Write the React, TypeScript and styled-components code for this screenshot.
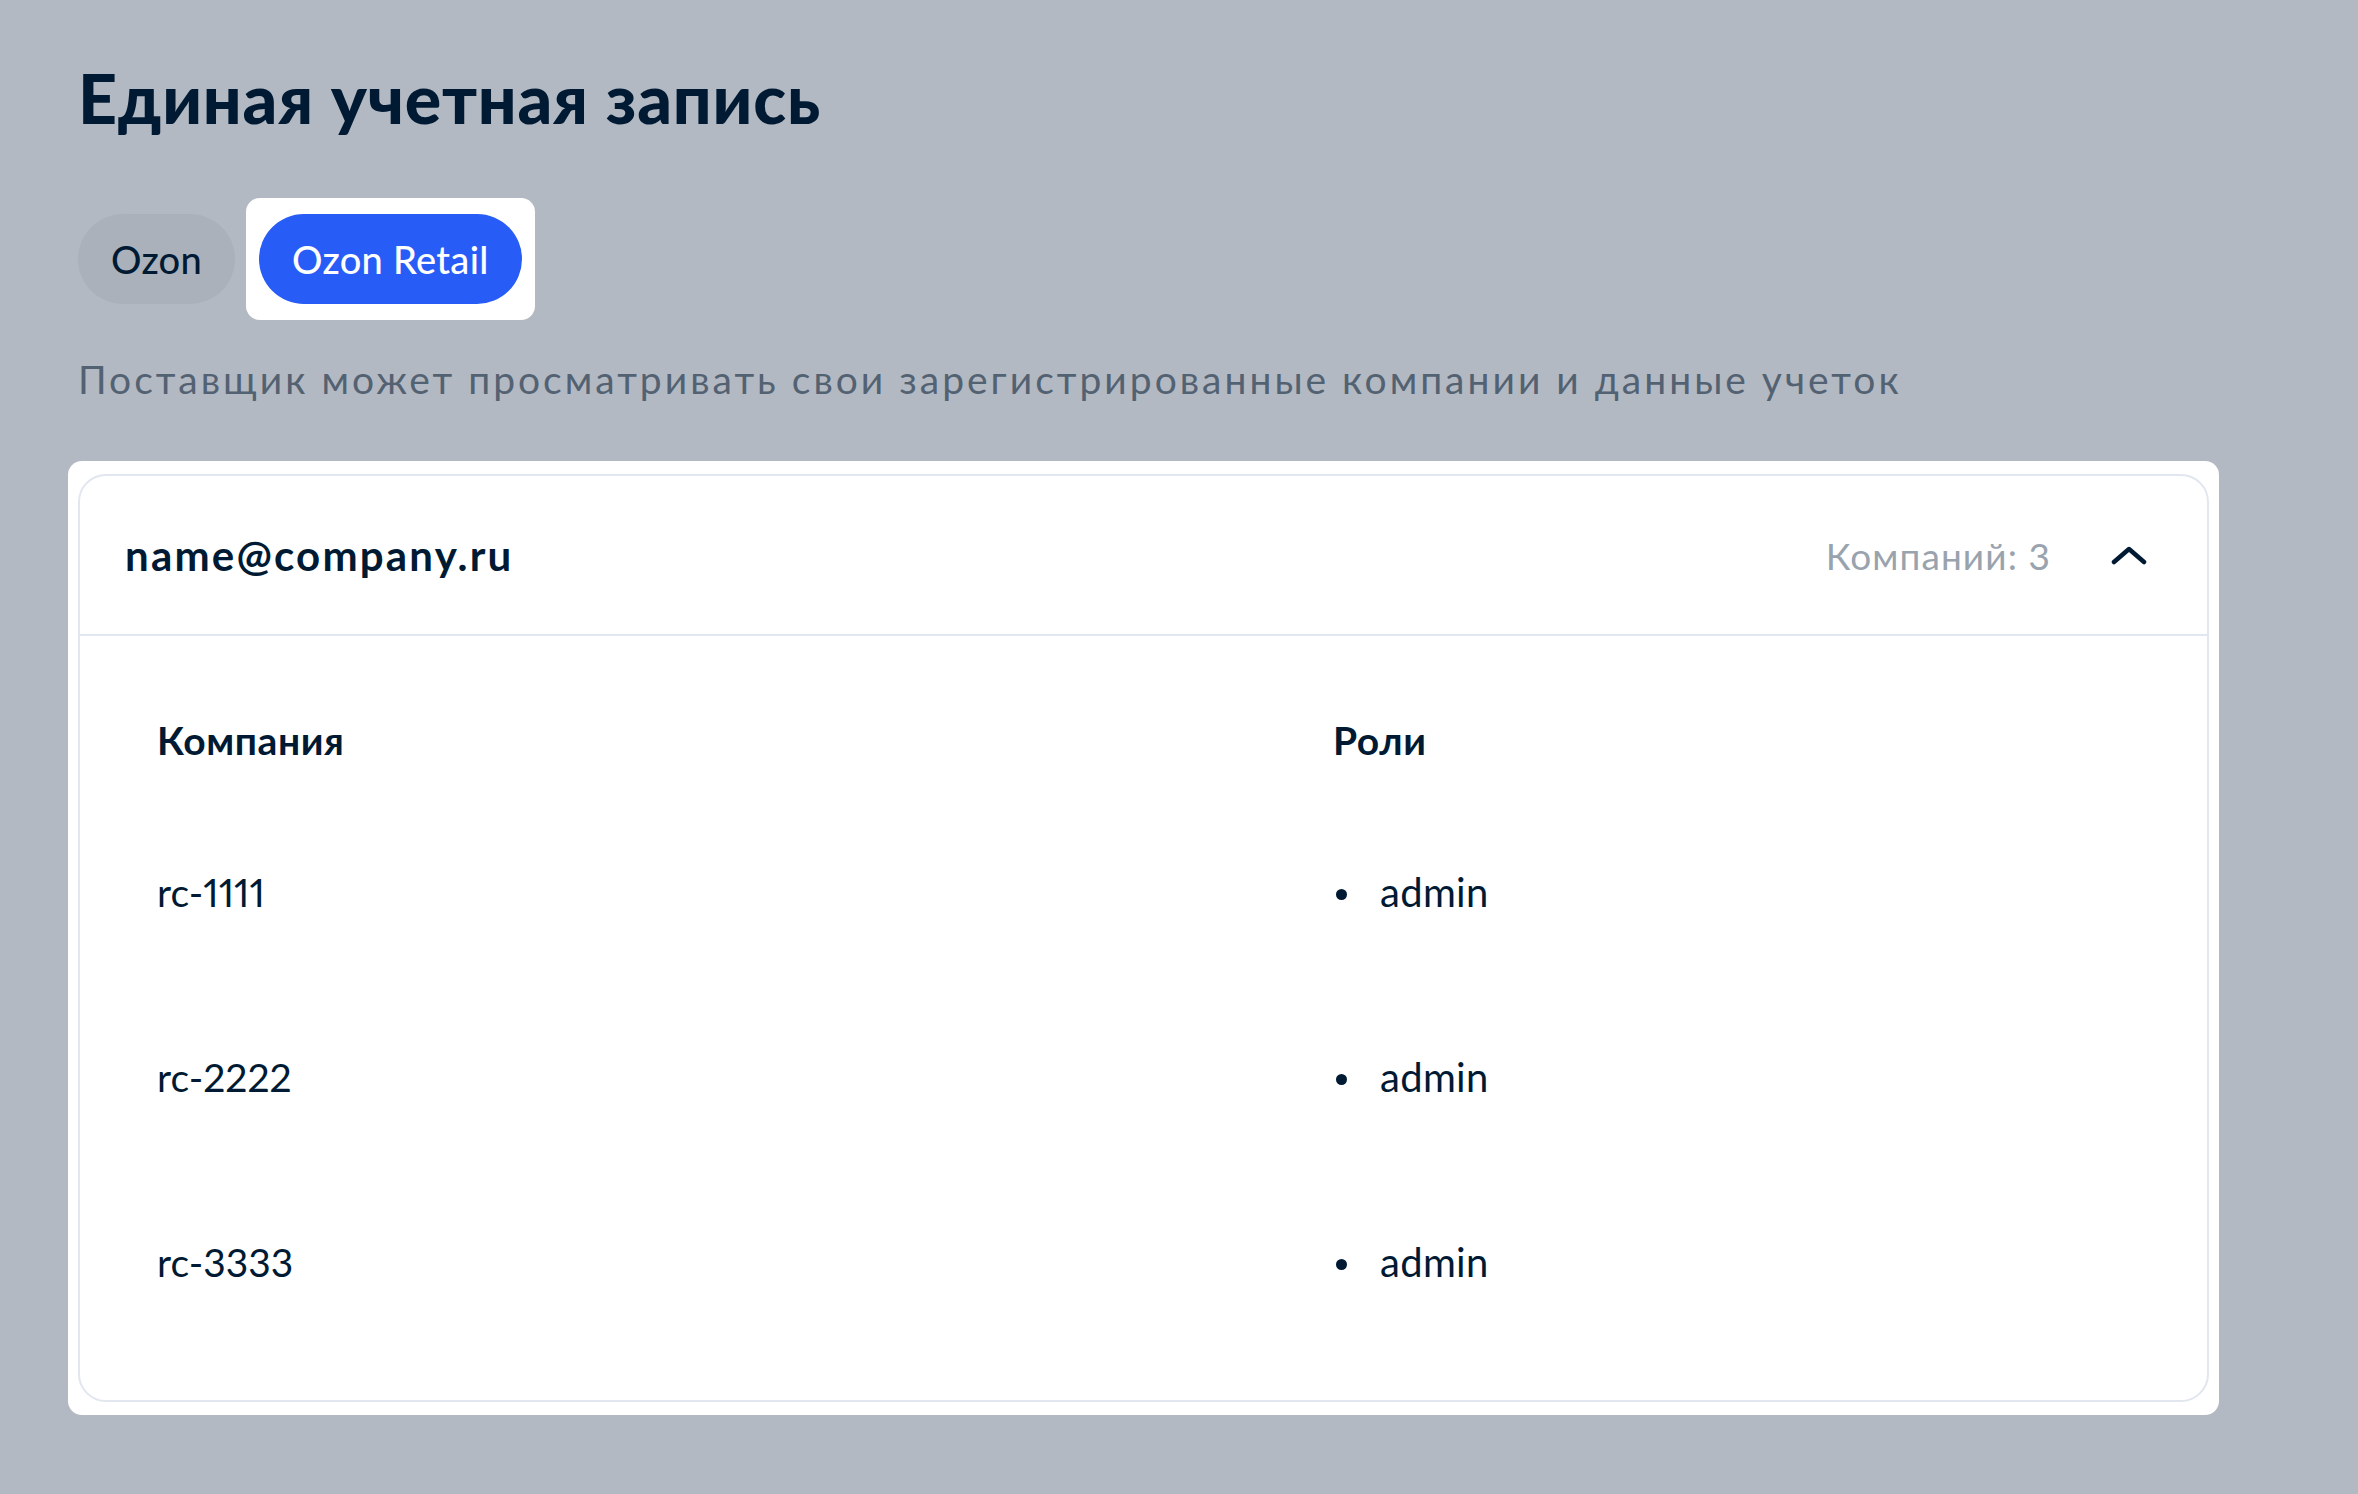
import { Fragment } from "react";
import styled, { createGlobalStyle } from "styled-components";

const GlobalStyle = createGlobalStyle`
  html, body {
    margin: 0;
    padding: 0;
    background: #b3b9c2;
  }
  body {
    font-family: Lato, "Noto Sans", sans-serif;
    font-variant-numeric: proportional-nums;
    color: #001a34;
  }
`;

const Page = styled.div`
  min-height: 1494px;
  box-sizing: border-box;
  padding: 58px 0 0 78px;
  width: 2220px;
`;

const Title = styled.h1`
  margin: 0;
  font-size: 68px;
  line-height: 80px;
  font-weight: 900;
  color: #001a34;
  letter-spacing: 0.8px;
`;

const Tabs = styled.div`
  display: flex;
  align-items: center;
  gap: 24px;
  margin-top: 76px;
`;

// white frame that lifts an element above the dimmed backdrop
const Spotlight = styled.div<{ $py: number; $px: number }>`
  background: #ffffff;
  border-radius: 14px;
  padding: ${(p) => `${p.$py}px ${p.$px}px`};
  margin: ${(p) => `-${p.$py}px -${p.$px}px`};
  display: flex;
  flex-direction: column;
`;

const Tab = styled.button<{ $active?: boolean }>`
  height: 90px;
  border: none;
  border-radius: 45px;
  padding: 0 33px;
  font-family: Lato, "Noto Sans", sans-serif;
  font-size: 38px;
  font-weight: 500;
  letter-spacing: 0.3px;
  background: ${(p) => (p.$active ? "#275cf6" : "#aab1bb")};
  color: ${(p) => (p.$active ? "#ffffff" : "#001a34")};
  cursor: pointer;
`;

const Description = styled.p`
  margin: 52px 0 0;
  font-size: 39px;
  line-height: 46px;
  color: #536272;
  letter-spacing: 3px;
`;

const CardWrap = styled.div`
  margin-top: 72px;
  width: 2131px;
`;

const Card = styled.div`
  border: 2px solid #e2e6ee;
  border-radius: 28px;
  background: #ffffff;
`;

const CardHeader = styled.div`
  height: 158px;
  display: flex;
  align-items: center;
  padding: 0 54px 0 45px;
  border-bottom: 2px solid #e2e6ee;
`;

const Email = styled.span`
  font-size: 42px;
  font-weight: 700;
  letter-spacing: 2.2px;
  color: #001a34;
  flex: 1;
`;

const Counter = styled.span`
  font-size: 37px;
  color: #99a3ae;
  letter-spacing: 1.1px;
  margin-right: 54px;
`;

const Toggle = styled.button`
  width: 48px;
  height: 48px;
  padding: 0;
  border: none;
  background: transparent;
  display: flex;
  align-items: center;
  justify-content: center;
  cursor: pointer;
`;

const CardBody = styled.div`
  padding: 44px 80px 46px 77px;
`;

const Table = styled.div`
  display: grid;
  grid-template-columns: 1176px 1fr;
`;

const HeadCell = styled.div`
  height: 119px;
  display: flex;
  align-items: center;
  font-size: 39px;
  font-weight: 700;
  letter-spacing: 0.6px;
  color: #001a34;
`;

const Cell = styled.div`
  height: 185px;
  display: flex;
  align-items: center;
  font-size: 39px;
  color: #001a34;
`;

const RoleList = styled.ul`
  margin: 0;
  padding: 0;
  list-style: none;
`;

const Role = styled.li`
  display: flex;
  align-items: center;
  font-size: 40px;
  letter-spacing: 0.3px;
  color: #001a34;

  &::before {
    content: "";
    width: 11px;
    height: 11px;
    border-radius: 50%;
    background: #001a34;
    margin: 6px 33px 0 3px;
  }
`;

const companies = [
  { name: "rc-1111", roles: ["admin"] },
  { name: "rc-2222", roles: ["admin"] },
  { name: "rc-3333", roles: ["admin"] },
];

function ChevronUp() {
  return (
    <svg width="36" height="20" viewBox="0 0 36 20" fill="none">
      <path
        d="M3 17L18 4L33 17"
        stroke="#001a34"
        strokeWidth="4.5"
        strokeLinecap="round"
        strokeLinejoin="round"
      />
    </svg>
  );
}

export default function App() {
  return (
    <>
      <GlobalStyle />
      <Page>
        <Title>Единая учетная запись</Title>
        <Tabs>
          <Tab>Ozon</Tab>
          <Spotlight $py={16} $px={13}>
            <Tab $active>Ozon Retail</Tab>
          </Spotlight>
        </Tabs>
        <Description>
          Поставщик может просматривать свои зарегистрированные компании и
          данные учеток
        </Description>
        <CardWrap>
          <Spotlight $py={13} $px={10}>
            <Card>
              <CardHeader>
                <Email>name@company.ru</Email>
                <Counter>Компаний: {companies.length}</Counter>
                <Toggle aria-label="Свернуть">
                  <ChevronUp />
                </Toggle>
              </CardHeader>
              <CardBody>
                <Table>
                  <HeadCell>Компания</HeadCell>
                  <HeadCell>Роли</HeadCell>
                  {companies.map((c) => (
                    <Fragment key={c.name}>
                      <Cell>{c.name}</Cell>
                      <Cell>
                        <RoleList>
                          {c.roles.map((r) => (
                            <Role key={r}>{r}</Role>
                          ))}
                        </RoleList>
                      </Cell>
                    </Fragment>
                  ))}
                </Table>
              </CardBody>
            </Card>
          </Spotlight>
        </CardWrap>
      </Page>
    </>
  );
}
